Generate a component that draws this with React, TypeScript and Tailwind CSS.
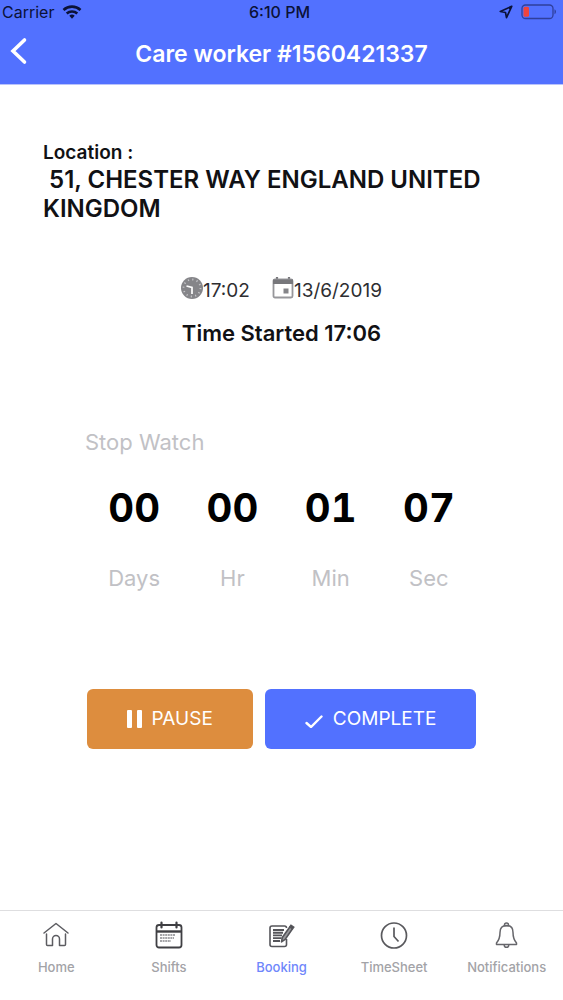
import React, { useEffect, useState } from 'react';

interface TabItem {
  label: string;
  icon: React.ReactNode;
}

const HomeIcon = () => (
  <svg viewBox="0 0 28 28" className="h-7 w-7" fill="none" stroke="#5c5c61" strokeWidth="1.5" strokeLinecap="round" strokeLinejoin="round">
    <path d="M2 12 14 2.500 26 12" />
    <path d="M4.500 13v10.500a1 1 0 0 0 1 1h5v-6.500a3.500 3.500 0 0 1 7 0v6.500h5a1 1 0 0 0 1-1V13" />
  </svg>
);

const ShiftsIcon = () => (
  <svg viewBox="0 0 28 28" className="h-7 w-7" fill="none" stroke="#3f3f43" strokeWidth="1.8">
    <rect x="1.500" y="4" width="25" height="22.500" rx="2.500" />
    <path d="M2 10.500h24" strokeWidth="2.4" />
    <path d="M6.500 1.500v5M21.500 1.500v5" strokeLinecap="round" strokeWidth="2.200" />
    <path d="M5 14h15M5 17h14M5 20h11" strokeWidth="1.400" strokeDasharray="2 .6" stroke="#88888c" />
  </svg>
);

const BookingIcon = () => (
  <svg viewBox="0 0 28 28" className="h-7 w-7" fill="none" stroke="#55555a" strokeWidth="1.6">
    <path d="M19.500 18v5.500a2 2 0 0 1-2 2H5a2 2 0 0 1-2-2V7a2 2 0 0 1 2-2h12.500a2 2 0 0 1 2 2" />
    <path d="M6 9h11M6 11.700h10M6 14.400h9M6 17.100h8.500M6 20h7" strokeWidth="1.900" />
    <path d="m14.500 20.800.8-4.300L23 5.800l2.500 1.900L18.200 18.400z" fill="#98989c" strokeLinejoin="round" />
    <path d="m23 5.800 1-1.500 2.700 1.900-1.200 1.500z" fill="#47474b" />
  </svg>
);

const TimeSheetIcon = () => (
  <svg viewBox="0 0 28 28" className="h-7 w-7" fill="none" stroke="#59595d" strokeWidth="1.700">
    <circle cx="14" cy="14.500" r="12.500" />
    <path d="M14 6.500v9l4.500 5" />
  </svg>
);

const NotificationsIcon = () => (
  <svg viewBox="0 0 28 28" className="h-7 w-7" fill="none" stroke="#66666b" strokeWidth="1.500" strokeLinejoin="round">
    <path d="M13.500 4.500c-4.800 0-6.500 3-6.500 7 0 5.500-.8 7.500-3.500 10.500v1.500h20V22c-2.700-3-3.500-5-3.500-10.500 0-4-1.700-7-6.500-7z" />
    <path d="M11.500 4.700V4a2 2 0 0 1 4 0v.7zM11.200 23.700a2.300 2.600 0 0 0 4.600 0" />
  </svg>
);

const WifiIcon = () => (
  <svg viewBox="0 0 20 15" className="h-4 w-5" fill="none" stroke="#0b1238" strokeWidth="2.600">
    <path d="M1.500 5.500a12.500 12.500 0 0 1 17 0" />
    <path d="M4.700 9a8 8 0 0 1 10.600 0" />
    <path d="m7.300 11.300 2.700 3 2.700-3a4 4 0 0 0-5.400 0z" fill="#0b1238" stroke="none" />
  </svg>
);

const LocationArrowIcon = () => (
  <svg viewBox="0 0 14 14" className="h-3.5 w-3.5" fill="none" stroke="#0b1238" strokeWidth="1.700" strokeLinejoin="round">
    <path d="M12.700 1.300 1.300 6.500l5.200 1 1 5.200z" />
  </svg>
);

const BatteryIcon = () => (
  <svg viewBox="0 0 36 16" className="h-4 w-9" fill="none">
    <rect x="1" y="1" width="31" height="13.500" rx="3.500" stroke="#2f3f9c" strokeWidth="1.300" />
    <rect x="2.500" y="2.800" width="5.500" height="10" rx="1.500" fill="#f0443e" />
    <path d="M33.500 5.300c2 1 2 4 0 5z" fill="#2f3f9c" />
  </svg>
);

const DialIcon = () => (
  <svg viewBox="0 0 22 24" className="h-6 w-5.5" fill="none">
    <circle cx="11" cy="11" r="11" fill="#858589" />
    <circle cx="11" cy="11" r="8.500" stroke="#c4c4c7" strokeWidth="1.800" strokeDasharray="1.200 3.250" />
    <path d="M5.500 9 11 10.500v6.500" stroke="#fff" strokeWidth="1.700" />
  </svg>
);

const CalendarIcon = () => (
  <svg viewBox="0 0 22 24" className="h-6 w-5.5" fill="none">
    <path d="M5 0v4M17 0v4" stroke="#77777b" strokeWidth="2.200" />
    <rect x="1.500" y="2.500" width="19" height="18" rx="1.500" stroke="#97979b" strokeWidth="1.800" />
    <path d="M1 2.500h20v4.500h-20z" fill="#77777b" />
    <rect x="11.500" y="11.500" width="5" height="5" fill="#858589" />
  </svg>
);

const TABS: TabItem[] = [
  { label: 'Home', icon: <HomeIcon /> },
  { label: 'Shifts', icon: <ShiftsIcon /> },
  { label: 'Booking', icon: <BookingIcon /> },
  { label: 'TimeSheet', icon: <TimeSheetIcon /> },
  { label: 'Notifications', icon: <NotificationsIcon /> },
];

const pad = (value: number) => String(value).padStart(2, '0');

export default function App() {
  const [seconds, setSeconds] = useState(67);
  const [isRunning, setIsRunning] = useState(false);
  const [activeTab, setActiveTab] = useState('Booking');

  useEffect(() => {
    if (!isRunning) return;
    const timer = setInterval(() => setSeconds((prev) => prev + 1), 1000);
    return () => clearInterval(timer);
  }, [isRunning]);

  const units = [
    { label: 'Days', value: Math.floor(seconds / 86400) },
    { label: 'Hr', value: Math.floor(seconds / 3600) % 24 },
    { label: 'Min', value: Math.floor(seconds / 60) % 60 },
    { label: 'Sec', value: seconds % 60 },
  ];

  return (
    <div className="flex min-h-screen flex-col bg-white font-['Inter',sans-serif] text-[#111114]">
      <header className="border-b border-[#b9c3fb] bg-[#5271ff]">
        {/* Status bar */}
        <div className="grid h-6 grid-cols-3 items-center pr-1.5 pl-0.5 text-base text-[#0b1238]">
          <div className="flex items-center gap-2">
            <span>Carrier</span>
            <WifiIcon />
          </div>
          <span className="text-center font-medium">6:10 PM</span>
          <div className="flex items-center justify-end gap-2">
            <LocationArrowIcon />
            <BatteryIcon />
          </div>
        </div>

        {/* Title bar */}
        <div className="grid h-15 grid-cols-[48px_1fr_48px] items-center">
          <button type="button" aria-label="Back" className="flex h-full items-center pb-1.5 pl-2.5">
            <svg viewBox="0 0 18 28" className="h-7 w-4.5" fill="none" stroke="#fff" strokeWidth="3.600" strokeLinecap="round">
              <path d="M14.500 3 3 14l11.500 11" />
            </svg>
          </button>
          <h1 className="text-center text-[23px] font-semibold text-white">Care worker #1560421337</h1>
        </div>
      </header>

      <main className="flex flex-1 flex-col">
        <section className="px-[43px] pt-14">
          <h2 className="text-[19px] leading-6 font-semibold">Location :</h2>
          <p className="text-2xl leading-[29px] font-semibold whitespace-pre-wrap">{' 51, CHESTER WAY ENGLAND UNITED KINGDOM'}</p>
        </section>

        <section className="pt-[54px] text-center">
          <div className="flex items-center justify-center gap-5.5 text-[19px] leading-6 text-[#2e2e31]">
            <span className="flex">
              <DialIcon />
              <span className="pt-0.5">17:02</span>
            </span>
            <span className="flex">
              <CalendarIcon />
              <span className="pt-0.5">13/6/2019</span>
            </span>
          </div>
          <p className="pt-4 text-[22px] leading-7 font-semibold">Time Started 17:06</p>
        </section>

        <section className="px-[85px] pt-[81px]">
          <h2 className="text-[22px] leading-7 text-[#c1c1c5]">Stop Watch</h2>
          <div className="grid grid-cols-4 pt-7 text-center">
            {units.map((unit) => (
              <div key={unit.label}>
                <div className="text-[40px] leading-12 font-bold text-black tabular-nums">{pad(unit.value)}</div>
                <div className="pt-8 text-[22px] leading-7 text-[#c1c1c5]">{unit.label}</div>
              </div>
            ))}
          </div>
        </section>

        <section className="flex justify-center gap-3 pt-[97px] text-[19px] text-white">
          <button
            type="button"
            onClick={() => setIsRunning(!isRunning)}
            className="flex h-15 items-center gap-2.5 rounded-md bg-[#dd8d3e] px-10"
          >
            <svg viewBox="0 0 15 18" className="h-4.5 w-[15px]" fill="#fff">
              <rect width="5" height="18" rx="1" />
              <rect x="10" width="5" height="18" rx="1" />
            </svg>
            PAUSE
          </button>
          <button
            type="button"
            onClick={() => setIsRunning(false)}
            className="flex h-15 items-center gap-2.5 rounded-md bg-[#5271ff] px-10"
          >
            <svg viewBox="0 0 18 18" className="h-4.5 w-4.5" fill="none" stroke="#fff" strokeWidth="2.400" strokeLinecap="round">
              <path d="m1.500 13 4.500 4L16.500 6.500" />
            </svg>
            COMPLETE
          </button>
        </section>
      </main>

      <nav className="grid h-[90px] grid-cols-5 border-t border-[#dedee0] pt-2.5">
        {TABS.map((tab) => (
          <button
            key={tab.label}
            type="button"
            onClick={() => setActiveTab(tab.label)}
            className={`flex flex-col items-center gap-2 text-[13px] leading-5 font-medium ${
              activeTab === tab.label ? 'text-[#6f87fb]' : 'text-[#a3a3a7]'
            }`}
          >
            {tab.icon}
            {tab.label}
          </button>
        ))}
      </nav>
    </div>
  );
}
